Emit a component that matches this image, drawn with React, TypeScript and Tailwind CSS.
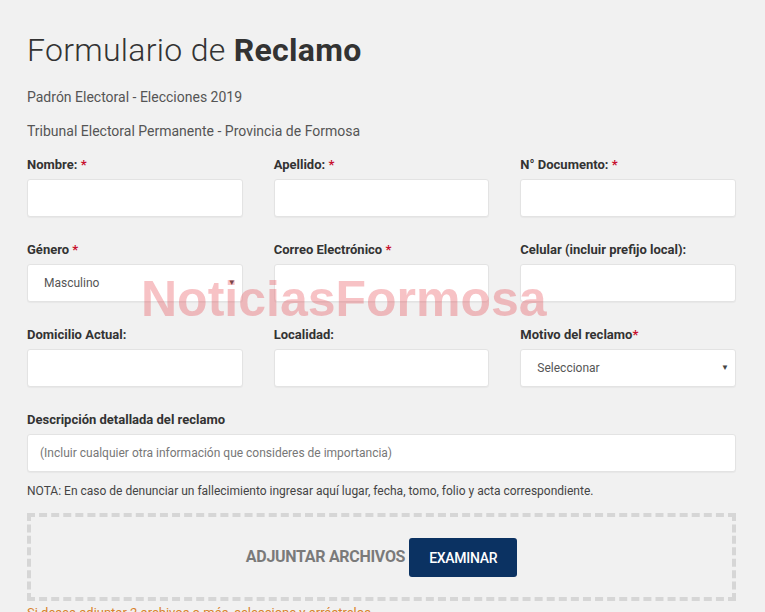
type Field = {
  label: string
  required?: boolean
  tight?: boolean
  select?: string
}

const ROWS: Field[][] = [
  [
    { label: 'Nombre:', required: true },
    { label: 'Apellido:', required: true },
    { label: 'N° Documento:', required: true },
  ],
  [
    { label: 'Género', required: true, select: 'Masculino' },
    { label: 'Correo Electrónico', required: true },
    { label: 'Celular (incluir prefijo local):' },
  ],
  [
    { label: 'Domicilio Actual:' },
    { label: 'Localidad:' },
    { label: 'Motivo del reclamo', required: true, tight: true, select: 'Seleccionar' },
  ],
]

const inputBox =
  'h-[38px] w-full bg-white border border-[#e3e3e3] rounded-[3px] shadow-[0_1px_1px_rgba(0,0,0,0.04)]'

function Label({ f }: { f: Field }) {
  return (
    <div className="h-[16px] text-[13px] font-bold text-[#333] leading-[16px]">
      {f.label}
      {f.required && <span className="text-[#c8102e]">{f.tight ? '*' : ' *'}</span>}
    </div>
  )
}

function Input({ f }: { f: Field }) {
  if (f.select) {
    return (
      <div className={`${inputBox} flex items-center justify-between pl-[16px] pr-[6px]`}>
        <span className="text-[12px] text-[#555]">{f.select}</span>
        <span className="text-[8px] text-[#444] leading-none">▼</span>
      </div>
    )
  }
  return <div className={inputBox} />
}

export default function App() {
  return (
    <div
      className="relative w-[765px] h-[612px] overflow-hidden bg-[#f1f1f1] text-[#333]"
      style={{ fontFamily: 'Roboto, "Open Sans", sans-serif' }}
    >
      <div className="pl-[27px] pr-[29px] pt-[32px]">
        <h1 className="text-[32px] font-light leading-[36px] text-[#333] tracking-[0.3px]">
          Formulario de <span className="font-bold">Reclamo</span>
        </h1>

        <p className="mt-[21px] text-[14px] leading-[16px] text-[#555]">
          Padrón Electoral - Elecciones 2019
        </p>
        <p className="mt-[18px] text-[14px] leading-[16px] text-[#555]">
          Tribunal Electoral Permanente - Provincia de Formosa
        </p>

        <div className="mt-[18px] flex flex-col gap-[25px]">
          {ROWS.map((row, i) => (
            <div key={i} className="grid grid-cols-3 gap-x-[31px]">
              {row.map(f => (
                <div key={f.label} className="flex flex-col gap-[6px]">
                  <Label f={f} />
                  <Input f={f} />
                </div>
              ))}
            </div>
          ))}
        </div>

        <div className="mt-[25px] flex flex-col gap-[6px]">
          <div className="h-[16px] text-[13px] font-bold leading-[16px]">Descripción detallada del reclamo</div>
          <div className={`${inputBox} flex items-center px-[12px]`}>
            <span className="text-[12px] text-[#777]">
              (Incluir cualquier otra información que consideres de importancia)
            </span>
          </div>
        </div>

        <p className="mt-[12px] text-[12px] leading-[14px] text-[#444]">
          NOTA: En caso de denunciar un fallecimiento ingresar aquí lugar, fecha, tomo, folio y acta correspondiente.
        </p>

        <div className="mt-[15px] h-[88px] border-[4px] border-dashed border-[#d6d6d6] flex items-center justify-center gap-[4px]">
          <span className="text-[16px] font-bold text-[#7a7a7a] tracking-[-0.3px]">ADJUNTAR ARCHIVOS</span>
          <button className="h-[39px] w-[108px] bg-[#0b3262] rounded-[3px] text-white text-[14px] font-medium tracking-[-0.3px] pt-[2px]">
            EXAMINAR
          </button>
        </div>

        <p className="mt-[4px] text-[13px] leading-[16px] text-[#d9822b]">
          Si desea adjuntar 2 archivos o más, seleccione y arrástrelos
        </p>
      </div>

      {/* marca de agua */}
      <div
        className="absolute left-[141px] top-[269px] text-[50px] font-bold leading-[60px] text-[rgba(232,70,80,0.33)] pointer-events-none"
        style={{ fontFamily: '"Liberation Sans", Arial, sans-serif' }}
      >
        NoticiasFormosa
      </div>
    </div>
  )
}
